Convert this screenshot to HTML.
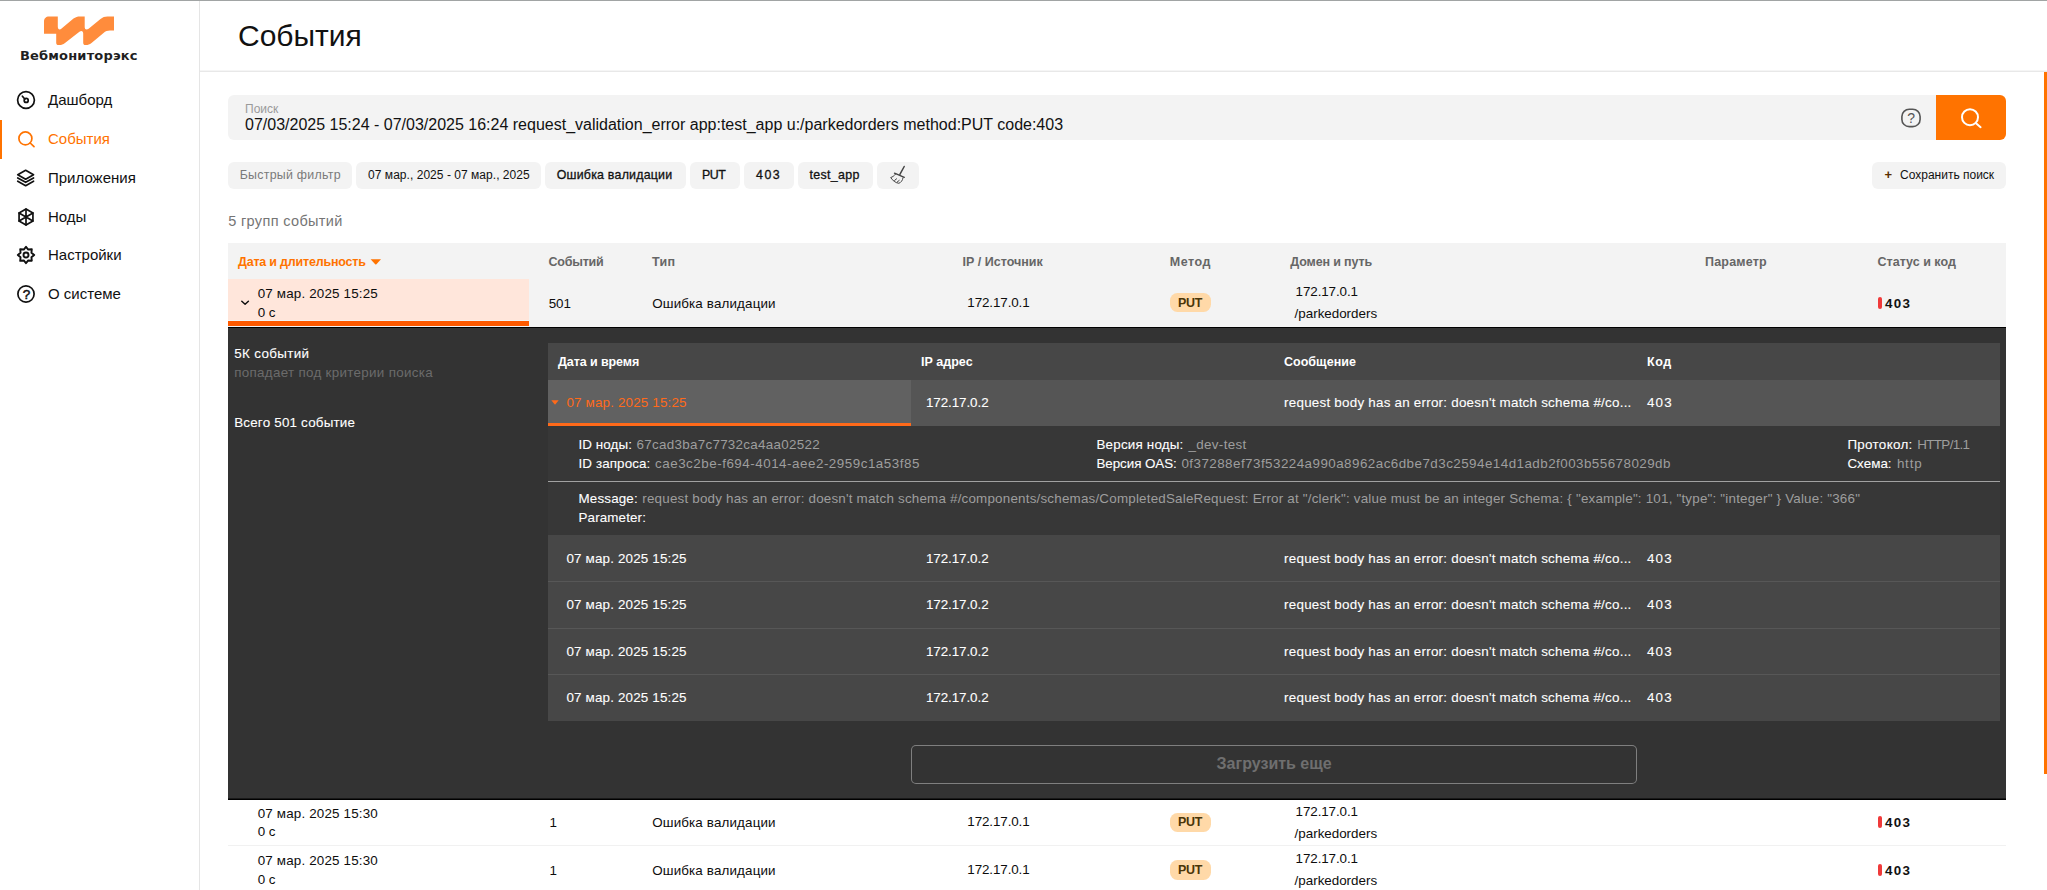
<!DOCTYPE html>
<html lang="ru">
<head>
<meta charset="utf-8">
<title>События — Вебмониторэкс</title>
<style>
html,body{margin:0;padding:0;}
body{width:2047px;height:890px;overflow:hidden;background:#fff;position:relative;font-family:"Liberation Sans", sans-serif;}
.b{position:absolute;box-sizing:border-box;}
.t{position:absolute;white-space:pre;}
.fl{font-family:"Liberation Sans", sans-serif;}
.fd{font-family:"DejaVu Sans", "Liberation Sans", sans-serif;}
svg{position:absolute;overflow:visible;}
.q{-webkit-text-stroke:0.5px currentColor;}
.btn{border:0;padding:0;margin:0;}
.med{-webkit-text-stroke:0.3px currentColor;}
.sm{-webkit-text-stroke:0.1px currentColor;}

</style>
</head>
<body>
<nav class="b" style="left:0px;top:0px;width:200px;height:890px;background:#fff;border-right:1px solid #e5e5e5;"><svg style="left:44.00px;top:16.00px" width="70" height="30" viewBox="0 0 70 30" ><path fill="#ff8c3c" d="M5 0.4H13.8V10.5C13.8 13.5 15.6 14.2 17.6 12.6L29.5 2.6C31.5 1 33.5 0.4 36 0.4H40.7V11C40.7 13.6 42.6 14.2 44.6 12.7L56.5 2.9C58.5 1.2 60.8 0.4 63.5 0.4H70V14.6H66C63.5 14.6 61.5 15.4 59.5 17L47.5 27C45.5 28.6 44 29 42 29H41.5C40 29 39.2 28.2 39.2 26.7V17.5C39.2 14.8 37.4 14.2 35.4 15.8L21 27C19 28.6 17.5 29 15.5 29H14.5C13 29 12.2 28.2 12.2 26.7V17.7H0V5.4C0 2.4 2 0.4 5 0.4Z"/></svg><span class="t fd " style="left:20.00px;top:46.00px;font-size:13px;line-height:20px;color:#1f1f1f;font-weight:700;letter-spacing:0.17px;">Вебмониторэкс</span><svg style="left:16.00px;top:90.40px" width="20" height="20" viewBox="0 0 20 20" fill="none" stroke="#111" stroke-width="1.7" stroke-linecap="round" stroke-linejoin="round"><circle cx="10" cy="10" r="8.4"/><circle cx="10.2" cy="10.4" r="2"/><path d="M8.8 9L6.4 6.2"/></svg><span class="t fl " style="left:48.00px;top:89.00px;font-size:15px;line-height:22px;color:#111;">Дашборд</span><svg style="left:16.00px;top:129.10px" width="20" height="20" viewBox="0 0 20 20" fill="none" stroke="#ff7300" stroke-width="1.7" stroke-linecap="round" stroke-linejoin="round"><circle cx="9.4" cy="9.4" r="6.5"/><path d="M14.2 14L18 17.7"/></svg><span class="t fl " style="left:48.00px;top:128.00px;font-size:15px;line-height:22px;color:#ff7300;">События</span><svg style="left:16.00px;top:167.90px" width="20" height="20" viewBox="0 0 20 20" fill="none" stroke="#111" stroke-width="1.7" stroke-linecap="round" stroke-linejoin="round"><path d="M9.65 2.3L17.55 6.7L9.65 11.2L1.75 6.7Z"/><path d="M1.75 9.9L9.65 14.35L17.55 9.9"/><path d="M1.75 13.2L9.65 17.65L17.55 13.2"/></svg><span class="t fl " style="left:48.00px;top:167.00px;font-size:15px;line-height:22px;color:#111;">Приложения</span><svg style="left:16.00px;top:206.55px" width="20" height="20" viewBox="0 0 20 20" fill="none" stroke="#111" stroke-width="1.7" stroke-linecap="round" stroke-linejoin="round"><path d="M10 2.0L16.93 6.0V14.0L10 18.0L3.07 14.0V6.0Z"/><path d="M10 2.0V18.0M3.07 6.0L16.93 14.0M16.93 6.0L3.07 14.0"/></svg><span class="t fl " style="left:48.00px;top:206.00px;font-size:15px;line-height:22px;color:#111;">Ноды</span><svg style="left:16.00px;top:245.20px" width="20" height="20" viewBox="0 0 20 20" fill="none" stroke="#111" stroke-width="1.7" stroke-linecap="round" stroke-linejoin="round"><circle cx="10" cy="10" r="2.5" stroke-width="1.9"/><path stroke-width="1.9" d="M10.00 1.80L12.26 4.55L15.80 4.20L15.45 7.74L18.20 10.00L15.45 12.26L15.80 15.80L12.26 15.45L10.00 18.20L7.74 15.45L4.20 15.80L4.55 12.26L1.80 10.00L4.55 7.74L4.20 4.20L7.74 4.55Z"/></svg><span class="t fl " style="left:48.00px;top:244.00px;font-size:15px;line-height:22px;color:#111;">Настройки</span><svg style="left:16.00px;top:283.90px" width="20" height="20" viewBox="0 0 20 20" fill="none" stroke="#111" stroke-width="1.7" stroke-linecap="round" stroke-linejoin="round"><circle cx="10" cy="10" r="8.1"/></svg><span class="t fl q" style="left:22.80px;top:285.00px;font-size:13.5px;line-height:20px;color:#111;">?</span><span class="t fl " style="left:48.00px;top:283.00px;font-size:15px;line-height:22px;color:#111;">О системе</span><div class="b" style="left:0px;top:120px;width:2px;height:38.7px;background:#ff7300;"></div></nav><header class="b" style="left:200px;top:0px;width:1847px;height:72px;background:#fff;border-bottom:1px solid #e8e8e8;box-shadow:inset 0 -1px 0 #f5f5f5;"><span class="t fl " style="left:38.00px;top:13.00px;font-size:30px;line-height:45px;color:#111;">События</span></header><div class="b" style="left:228px;top:95px;width:1708px;height:45px;background:#f3f3f3;border-radius:6px 0 0 6px;"><span class="t fl " style="left:17.00px;top:5.00px;font-size:12px;line-height:18px;color:#9a9a9a;">Поиск</span><span class="t fl " style="left:17.00px;top:18.00px;font-size:16px;line-height:24px;color:#111;">07/03/2025 15:24 - 07/03/2025 16:24 request_validation_error app:test_app u:/parkedorders method:PUT code:403</span><svg style="left:1673.00px;top:13.00px" width="20" height="20" viewBox="0 0 20 20" fill="none" stroke="#555" stroke-width="1.6"><rect x="0.9" y="1.2" width="18.2" height="17.4" rx="7.4" ry="7.2"/></svg><span class="t fl " style="left:1679.20px;top:13.00px;font-size:14px;line-height:21px;color:#555;">?</span></div><button class="b btn" style="left:1936px;top:95px;width:70px;height:45px;background:#ff7300;border-radius:0 6px 6px 0;"><svg style="left:24.00px;top:12.00px" width="22" height="22" viewBox="0 0 22 22" fill="none" stroke="#fff" stroke-width="2" stroke-linecap="round"><circle cx="10" cy="10.2" r="8"/><path d="M16 16.2L20.6 20.2"/></svg></button><div class="b chip" style="left:227.8px;top:161.5px;width:124.1px;height:27.2px;background:#f3f3f3;border-radius:6px;"><span class="t fl " style="left:11.90px;top:4.50px;font-size:12.4px;line-height:19px;color:#7a7a7a;letter-spacing:0.264px;">Быстрый фильтр</span></div><div class="b chip" style="left:356.2px;top:161.5px;width:184.7px;height:27.2px;background:#f3f3f3;border-radius:6px;"><span class="t fl " style="left:11.90px;top:4.50px;font-size:12px;line-height:18px;color:#111;letter-spacing:0.035px;">07 мар., 2025 - 07 мар., 2025</span></div><div class="b chip" style="left:544.8px;top:161.5px;width:141.2px;height:27.2px;background:#f3f3f3;border-radius:6px;"><span class="t fl med" style="left:11.90px;top:4.50px;font-size:12.4px;line-height:19px;color:#111;letter-spacing:0.222px;">Ошибка валидации</span></div><div class="b chip" style="left:690px;top:161.5px;width:50.2px;height:27.2px;background:#f3f3f3;border-radius:6px;"><span class="t fl med" style="left:11.90px;top:4.50px;font-size:12.4px;line-height:19px;color:#111;letter-spacing:-0.398px;">PUT</span></div><div class="b chip" style="left:743.9px;top:161.5px;width:50.2px;height:27.2px;background:#f3f3f3;border-radius:6px;"><span class="t fl med" style="left:12.10px;top:4.50px;font-size:12.4px;line-height:19px;color:#111;letter-spacing:1.506px;">403</span></div><div class="b chip" style="left:797.8px;top:161.5px;width:75.3px;height:27.2px;background:#f3f3f3;border-radius:6px;"><span class="t fl med" style="left:11.70px;top:4.50px;font-size:12.4px;line-height:19px;color:#111;letter-spacing:0.336px;">test_app</span></div><div class="b chip" style="left:877px;top:161.5px;width:42px;height:27.2px;background:#f3f3f3;border-radius:6px;"><svg style="left:9.00px;top:2.50px" width="22" height="22" viewBox="0 0 22 22" fill="none" stroke="#444" stroke-width="1" stroke-linecap="round" stroke-linejoin="round"><path d="M18.2 2.5L13.9 10.3" stroke-width="1.5"/><path d="M8.5 9.2L18.3 13.3" stroke-width="1.4"/><path d="M9.4 10.3C8 12 6.5 13 4.7 13.5C6.5 16.5 9.5 18.8 12.8 19.3C15 18.5 16.6 16.5 17 13.9"/><path d="M8.6 16.4L10.6 14.8M11 18.2L13.2 16.4"/></svg></div><div class="b chip" style="left:1872px;top:161.5px;width:134px;height:27.2px;background:#f3f3f3;border-radius:6px;"><span class="t fl " style="left:12.50px;top:3.50px;font-size:13px;line-height:20px;color:#5a2d00;font-weight:700;">+</span><span class="t fl " style="left:28.00px;top:4.50px;font-size:12px;line-height:18px;color:#111;">Сохранить поиск</span></div><span class="t fl " style="left:228.20px;top:210.00px;font-size:14.5px;line-height:22px;color:#757575;letter-spacing:0.349px;">5 групп событий</span><div class="b" style="left:228px;top:243px;width:1778px;height:647px;"><div class="b" style="left:0px;top:0px;width:1778px;height:84px;background:#f3f3f3;"></div><span class="t fl " style="left:10.00px;top:10.00px;font-size:12.5px;line-height:19px;color:#ff7300;font-weight:700;letter-spacing:-0.206px;">Дата и длительность</span><svg style="left:142.00px;top:16.00px" width="12" height="6" viewBox="0 0 12 6" ><path d="M0.6 0.3H11L6.4 5.2C6 5.6 5.6 5.6 5.2 5.2Z" fill="#ff7300"/></svg><span class="t fl " style="left:320.50px;top:10.00px;font-size:12.5px;line-height:19px;color:#666;font-weight:700;letter-spacing:-0.227px;">Событий</span><span class="t fl " style="left:424.10px;top:10.00px;font-size:12.5px;line-height:19px;color:#666;font-weight:700;letter-spacing:0.297px;">Тип</span><span class="t fl " style="left:734.60px;top:10.00px;font-size:12.5px;line-height:19px;color:#666;font-weight:700;letter-spacing:0.019px;">IP / Источник</span><span class="t fl " style="left:941.70px;top:10.00px;font-size:12.5px;line-height:19px;color:#666;font-weight:700;letter-spacing:0.534px;">Метод</span><span class="t fl " style="left:1062.30px;top:10.00px;font-size:12.5px;line-height:19px;color:#666;font-weight:700;letter-spacing:-0.143px;">Домен и путь</span><span class="t fl " style="left:1477.00px;top:10.00px;font-size:12.5px;line-height:19px;color:#666;font-weight:700;letter-spacing:0.196px;">Параметр</span><span class="t fl " style="left:1649.50px;top:10.00px;font-size:12.5px;line-height:19px;color:#666;font-weight:700;letter-spacing:0.012px;">Статус и код</span><div class="b row" style="left:0px;top:37px;width:1778px;height:47px;"><div class="b" style="left:0px;top:-0.7px;width:301px;height:40.6px;background:#ffe6db;"></div><div class="b" style="left:0px;top:41px;width:301px;height:4.8px;background:#ff5a00;"></div><svg style="left:12.00px;top:20.00px" width="10" height="6" viewBox="0 0 10 6" fill="none" stroke="#111" stroke-width="1.5" stroke-linecap="round" stroke-linejoin="round"><path d="M1.8 1.2L5.1 4.2L8.4 1.2"/></svg><span class="t fl " style="left:29.70px;top:4.00px;font-size:13.4px;line-height:20px;color:#0d0d0d;letter-spacing:0.171px;">07 мар. 2025 15:25</span><span class="t fl " style="left:29.70px;top:23.00px;font-size:13.4px;line-height:20px;color:#0d0d0d;letter-spacing:-0.038px;">0 с</span><span class="t fl " style="left:320.80px;top:14.00px;font-size:13.4px;line-height:20px;color:#0d0d0d;letter-spacing:-0.122px;">501</span><span class="t fl " style="left:424.20px;top:14.00px;font-size:13.4px;line-height:20px;color:#0d0d0d;letter-spacing:0.144px;">Ошибка валидации</span><span class="t fl " style="left:739.30px;top:13.00px;font-size:13.4px;line-height:20px;color:#0d0d0d;letter-spacing:-0.1px;">172.17.0.1</span><div class="b" style="left:942px;top:13.1px;width:41px;height:19.2px;background:#ffd9a8;border-radius:7.5px;"><span class="t fl " style="left:8.00px;top:0.90px;font-size:12.5px;line-height:19px;color:#4a3508;font-weight:700;letter-spacing:-0.25px;">PUT</span></div><span class="t fl " style="left:1067.60px;top:2.00px;font-size:13.4px;line-height:20px;color:#0d0d0d;letter-spacing:-0.1px;">172.17.0.1</span><span class="t fl " style="left:1066.60px;top:24.00px;font-size:13.4px;line-height:20px;color:#0d0d0d;letter-spacing:-0.01px;">/parkedorders</span><div class="b" style="left:1650.1px;top:16.9px;width:3.9px;height:11.9px;background:#f03a3a;border-radius:2px;"></div><span class="t fl " style="left:1657.10px;top:14.00px;font-size:13.4px;line-height:20px;color:#111;font-weight:700;letter-spacing:1.228px;">403</span></div><div class="b row" style="left:0px;top:556.5px;width:1778px;height:47px;"><span class="t fl " style="left:29.70px;top:4.50px;font-size:13.4px;line-height:20px;color:#0d0d0d;letter-spacing:0.171px;">07 мар. 2025 15:30</span><span class="t fl " style="left:29.70px;top:22.50px;font-size:13.4px;line-height:20px;color:#0d0d0d;letter-spacing:-0.038px;">0 с</span><span class="t fl " style="left:321.40px;top:13.50px;font-size:13.4px;line-height:20px;color:#0d0d0d;">1</span><span class="t fl " style="left:424.20px;top:13.50px;font-size:13.4px;line-height:20px;color:#0d0d0d;letter-spacing:0.144px;">Ошибка валидации</span><span class="t fl " style="left:739.30px;top:12.50px;font-size:13.4px;line-height:20px;color:#0d0d0d;letter-spacing:-0.1px;">172.17.0.1</span><div class="b" style="left:942px;top:13.1px;width:41px;height:19.2px;background:#ffd9a8;border-radius:7.5px;"><span class="t fl " style="left:8.00px;top:0.40px;font-size:12.5px;line-height:19px;color:#4a3508;font-weight:700;letter-spacing:-0.25px;">PUT</span></div><span class="t fl " style="left:1067.60px;top:2.50px;font-size:13.4px;line-height:20px;color:#0d0d0d;letter-spacing:-0.1px;">172.17.0.1</span><span class="t fl " style="left:1066.60px;top:24.50px;font-size:13.4px;line-height:20px;color:#0d0d0d;letter-spacing:-0.01px;">/parkedorders</span><div class="b" style="left:1650.1px;top:16.9px;width:3.9px;height:11.9px;background:#f03a3a;border-radius:2px;"></div><span class="t fl " style="left:1657.10px;top:13.50px;font-size:13.4px;line-height:20px;color:#111;font-weight:700;letter-spacing:1.228px;">403</span></div><div class="b" style="left:0px;top:602.3px;width:1778px;height:1.2px;background:#f1f1f1;"></div><div class="b row" style="left:0px;top:604.3px;width:1778px;height:47px;"><span class="t fl " style="left:29.70px;top:3.70px;font-size:13.4px;line-height:20px;color:#0d0d0d;letter-spacing:0.171px;">07 мар. 2025 15:30</span><span class="t fl " style="left:29.70px;top:22.70px;font-size:13.4px;line-height:20px;color:#0d0d0d;letter-spacing:-0.038px;">0 с</span><span class="t fl " style="left:321.40px;top:13.70px;font-size:13.4px;line-height:20px;color:#0d0d0d;">1</span><span class="t fl " style="left:424.20px;top:13.70px;font-size:13.4px;line-height:20px;color:#0d0d0d;letter-spacing:0.144px;">Ошибка валидации</span><span class="t fl " style="left:739.30px;top:12.70px;font-size:13.4px;line-height:20px;color:#0d0d0d;letter-spacing:-0.1px;">172.17.0.1</span><div class="b" style="left:942px;top:13.1px;width:41px;height:19.2px;background:#ffd9a8;border-radius:7.5px;"><span class="t fl " style="left:8.00px;top:0.60px;font-size:12.5px;line-height:19px;color:#4a3508;font-weight:700;letter-spacing:-0.25px;">PUT</span></div><span class="t fl " style="left:1067.60px;top:1.70px;font-size:13.4px;line-height:20px;color:#0d0d0d;letter-spacing:-0.1px;">172.17.0.1</span><span class="t fl " style="left:1066.60px;top:23.70px;font-size:13.4px;line-height:20px;color:#0d0d0d;letter-spacing:-0.01px;">/parkedorders</span><div class="b" style="left:1650.1px;top:16.9px;width:3.9px;height:11.9px;background:#f03a3a;border-radius:2px;"></div><span class="t fl " style="left:1657.10px;top:13.70px;font-size:13.4px;line-height:20px;color:#111;font-weight:700;letter-spacing:1.228px;">403</span></div><div class="b" style="left:0px;top:84px;width:1778px;height:472.5px;background:#333;box-shadow:inset 0 1px 0 #000, inset 0 -1.5px 0 #000;"><span class="t fl sm" style="left:6.20px;top:17.00px;font-size:13.4px;line-height:20px;color:#fff;letter-spacing:0.36px;">5К событий</span><span class="t fl " style="left:6.20px;top:36.00px;font-size:13.4px;line-height:20px;color:#6b6b6b;letter-spacing:0.304px;">попадает под критерии поиска</span><span class="t fl sm" style="left:6.20px;top:86.00px;font-size:13.4px;line-height:20px;color:#fff;letter-spacing:0.203px;">Всего 501 событие</span><div class="b" style="left:320px;top:16.3px;width:1452px;height:36.7px;background:#474747;"></div><span class="t fl " style="left:330.00px;top:26.00px;font-size:12.5px;line-height:19px;color:#fff;font-weight:700;letter-spacing:-0.084px;">Дата и время</span><span class="t fl " style="left:693.00px;top:26.00px;font-size:12.5px;line-height:19px;color:#fff;font-weight:700;letter-spacing:0.039px;">IP адрес</span><span class="t fl " style="left:1056.00px;top:26.00px;font-size:12.5px;line-height:19px;color:#fff;font-weight:700;letter-spacing:0.023px;">Сообщение</span><span class="t fl " style="left:1419.00px;top:26.00px;font-size:12.5px;line-height:19px;color:#fff;font-weight:700;letter-spacing:0.577px;">Код</span><div class="b" style="left:320px;top:53px;width:1452px;height:45.7px;background:#555;"></div><div class="b" style="left:320px;top:53px;width:363px;height:43px;background:#616161;"></div><div class="b" style="left:320px;top:95.8px;width:363px;height:3.1px;background:#ff6a1a;"></div><svg style="left:323.00px;top:73.40px" width="8" height="5" viewBox="0 0 8 5" ><path d="M0.3 0.2H7.7L4.4 4.2C4.1 4.5 3.9 4.5 3.6 4.2Z" fill="#ff6a1a"/></svg><span class="t fl " style="left:338.50px;top:66.00px;font-size:13.4px;line-height:20px;color:#ff6a1a;letter-spacing:0.165px;">07 мар. 2025 15:25</span><span class="t fl sm" style="left:697.90px;top:66.00px;font-size:13.4px;line-height:20px;color:#fff;letter-spacing:-0.066px;">172.17.0.2</span><span class="t fl sm" style="left:1056.10px;top:66.00px;font-size:13.4px;line-height:20px;color:#fff;letter-spacing:0.235px;">request body has an error: doesn't match schema #/co...</span><span class="t fl sm" style="left:1419.00px;top:66.00px;font-size:13.4px;line-height:20px;color:#fff;letter-spacing:1.128px;">403</span><div class="b" style="left:320px;top:98.7px;width:1452px;height:109px;background:#373737;"></div><div class="b" style="left:320px;top:154.2px;width:1452px;height:1.2px;background:#a2a2a2;"></div><span class="t fl sm" style="left:350.50px;top:108.00px;font-size:13.4px;line-height:20px;color:#fff;letter-spacing:0.082px;">ID ноды:</span><span class="t fl " style="left:408.50px;top:108.00px;font-size:13.4px;line-height:20px;color:#9e9e9e;letter-spacing:0.292px;">67cad3ba7c7732ca4aa02522</span><span class="t fl sm" style="left:350.50px;top:127.00px;font-size:13.4px;line-height:20px;color:#fff;letter-spacing:0.108px;">ID запроса:</span><span class="t fl " style="left:427.00px;top:127.00px;font-size:13.4px;line-height:20px;color:#9e9e9e;letter-spacing:0.513px;">cae3c2be-f694-4014-aee2-2959c1a53f85</span><span class="t fl sm" style="left:868.50px;top:108.00px;font-size:13.4px;line-height:20px;color:#fff;letter-spacing:0.192px;">Версия ноды:</span><span class="t fl " style="left:960.50px;top:108.00px;font-size:13.4px;line-height:20px;color:#9e9e9e;letter-spacing:0.326px;">_dev-test</span><span class="t fl sm" style="left:868.50px;top:127.00px;font-size:13.4px;line-height:20px;color:#fff;letter-spacing:-0.068px;">Версия OAS:</span><span class="t fl " style="left:953.40px;top:127.00px;font-size:13.4px;line-height:20px;color:#9e9e9e;letter-spacing:0.458px;">0f37288ef73f53224a990a8962ac6dbe7d3c2594e14d1adb2f003b55678029db</span><span class="t fl sm" style="left:1619.40px;top:108.00px;font-size:13.4px;line-height:20px;color:#fff;letter-spacing:0.318px;">Протокол:</span><span class="t fl " style="left:1689.30px;top:108.00px;font-size:13.4px;line-height:20px;color:#9e9e9e;letter-spacing:-0.657px;">HTTP/1.1</span><span class="t fl sm" style="left:1619.40px;top:127.00px;font-size:13.4px;line-height:20px;color:#fff;letter-spacing:0.031px;">Схема:</span><span class="t fl " style="left:1668.90px;top:127.00px;font-size:13.4px;line-height:20px;color:#9e9e9e;letter-spacing:0.785px;">http</span><span class="t fl sm" style="left:350.50px;top:162.00px;font-size:13.4px;line-height:20px;color:#fff;letter-spacing:0.163px;">Message:</span><span class="t fl " style="left:414.30px;top:162.00px;font-size:13.4px;line-height:20px;color:#9e9e9e;letter-spacing:0.201px;">request body has an error: doesn't match schema #/components/schemas/CompletedSaleRequest: Error at "/clerk": value must be an integer Schema: { "example": 101, "type": "integer" } Value: "366"</span><span class="t fl sm" style="left:350.50px;top:181.00px;font-size:13.4px;line-height:20px;color:#fff;letter-spacing:0.13px;">Parameter:</span><div class="b" style="left:320px;top:207.7px;width:1452px;height:46.5px;background:#474747;"></div><span class="t fl sm" style="left:338.50px;top:222.00px;font-size:13.4px;line-height:20px;color:#fff;letter-spacing:0.165px;">07 мар. 2025 15:25</span><span class="t fl sm" style="left:697.90px;top:222.00px;font-size:13.4px;line-height:20px;color:#fff;letter-spacing:-0.066px;">172.17.0.2</span><span class="t fl sm" style="left:1056.10px;top:222.00px;font-size:13.4px;line-height:20px;color:#fff;letter-spacing:0.235px;">request body has an error: doesn't match schema #/co...</span><span class="t fl sm" style="left:1419.00px;top:222.00px;font-size:13.4px;line-height:20px;color:#fff;letter-spacing:1.128px;">403</span><div class="b" style="left:320px;top:254.2px;width:1452px;height:46.5px;background:#474747;border-top:1px solid #575757;"></div><span class="t fl sm" style="left:338.50px;top:268.00px;font-size:13.4px;line-height:20px;color:#fff;letter-spacing:0.165px;">07 мар. 2025 15:25</span><span class="t fl sm" style="left:697.90px;top:268.00px;font-size:13.4px;line-height:20px;color:#fff;letter-spacing:-0.066px;">172.17.0.2</span><span class="t fl sm" style="left:1056.10px;top:268.00px;font-size:13.4px;line-height:20px;color:#fff;letter-spacing:0.235px;">request body has an error: doesn't match schema #/co...</span><span class="t fl sm" style="left:1419.00px;top:268.00px;font-size:13.4px;line-height:20px;color:#fff;letter-spacing:1.128px;">403</span><div class="b" style="left:320px;top:300.7px;width:1452px;height:46.5px;background:#474747;border-top:1px solid #575757;"></div><span class="t fl sm" style="left:338.50px;top:315.00px;font-size:13.4px;line-height:20px;color:#fff;letter-spacing:0.165px;">07 мар. 2025 15:25</span><span class="t fl sm" style="left:697.90px;top:315.00px;font-size:13.4px;line-height:20px;color:#fff;letter-spacing:-0.066px;">172.17.0.2</span><span class="t fl sm" style="left:1056.10px;top:315.00px;font-size:13.4px;line-height:20px;color:#fff;letter-spacing:0.235px;">request body has an error: doesn't match schema #/co...</span><span class="t fl sm" style="left:1419.00px;top:315.00px;font-size:13.4px;line-height:20px;color:#fff;letter-spacing:1.128px;">403</span><div class="b" style="left:320px;top:347.2px;width:1452px;height:46.5px;background:#474747;border-top:1px solid #575757;"></div><span class="t fl sm" style="left:338.50px;top:361.00px;font-size:13.4px;line-height:20px;color:#fff;letter-spacing:0.165px;">07 мар. 2025 15:25</span><span class="t fl sm" style="left:697.90px;top:361.00px;font-size:13.4px;line-height:20px;color:#fff;letter-spacing:-0.066px;">172.17.0.2</span><span class="t fl sm" style="left:1056.10px;top:361.00px;font-size:13.4px;line-height:20px;color:#fff;letter-spacing:0.235px;">request body has an error: doesn't match schema #/co...</span><span class="t fl sm" style="left:1419.00px;top:361.00px;font-size:13.4px;line-height:20px;color:#fff;letter-spacing:1.128px;">403</span><div class="b more" style="left:683px;top:418px;width:726px;height:38.5px;box-shadow:inset 0 0 0 1px #7f7f7f;border-radius:5px;"><span class="t fl " style="left:305.60px;top:7.00px;font-size:16px;line-height:24px;color:#6f6f6f;font-weight:700;">Загрузить еще</span></div></div></div><div class="b" style="left:2044px;top:71.5px;width:3px;height:702px;background:#ff7300;"></div><div class="b" style="left:0px;top:0px;width:2047px;height:1px;background:#a1a4a4;"></div>
</body>
</html>
